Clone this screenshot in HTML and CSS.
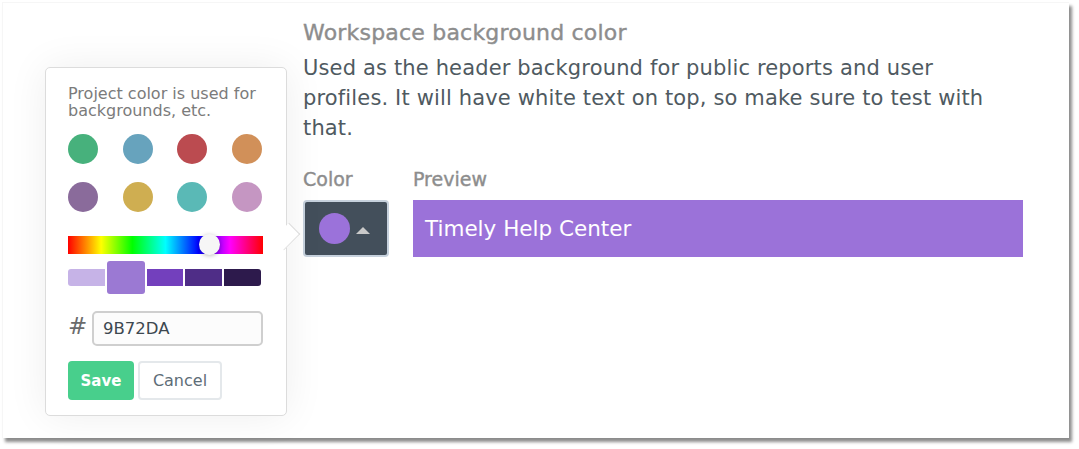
FILE: index.html
```html
<!DOCTYPE html>
<html>
<head>
<meta charset="utf-8">
<link rel="stylesheet" href="styles.css">
</head>
<body>
<div class="frame">
  <div class="popover">
    <p class="hint">Project color is used for backgrounds, etc.</p>
    <div class="swatches">
      <span class="dot" style="background:#47b17c"></span>
      <span class="dot" style="background:#67a3bd"></span>
      <span class="dot" style="background:#bb4b50"></span>
      <span class="dot" style="background:#d19059"></span>
      <span class="dot" style="background:#8a6b9b"></span>
      <span class="dot" style="background:#cfae51"></span>
      <span class="dot" style="background:#5ab9b6"></span>
      <span class="dot" style="background:#c596c2"></span>
    </div>
    <div class="hue"><span class="thumb"></span></div>
    <div class="shades">
      <span class="shade" style="background:#c6b3e7"></span>
      <span class="shade selected" style="background:#9b79d3"></span>
      <span class="shade" style="background:#7340bd"></span>
      <span class="shade" style="background:#4f2d87"></span>
      <span class="shade" style="background:#2d1a4c"></span>
    </div>
    <div class="hexrow">
      <span class="hash">#</span>
      <div class="hexinput">9B72DA</div>
    </div>
    <div class="buttons">
      <button class="btn save">Save</button>
      <button class="btn cancel">Cancel</button>
    </div>
  </div>
  <div class="content">
    <h2 class="title">Workspace background color</h2>
    <p class="desc">Used as the header background for public reports and user profiles. It will have white text on top, so make sure to test with that.</p>
    <div class="fields">
      <div class="field color-field">
        <div class="label">Color</div>
        <div class="color-btn">
          <span class="color-dot"></span>
          <span class="caret"></span>
        </div>
      </div>
      <div class="field preview-field">
        <div class="label">Preview</div>
        <div class="preview">Timely Help Center</div>
      </div>
    </div>
  </div>
</div>
</body>
</html>
```
FILE: styles.css
```css
* { box-sizing: border-box; }
html, body { margin: 0; padding: 0; background: #fff; }
body {
  font-family: "DejaVu Sans", "Noto Sans", sans-serif;
  width: 1079px;
  height: 449px;
  overflow: hidden;
}
.frame {
  margin: 2px 0 0 2px;
  width: 1067px;
  height: 436px;
  background: #fff;
  border-top: 1px solid #f6f6f6;
  border-left: 1px solid #f6f6f6;
  box-shadow: 3px 4px 3px rgba(0,0,0,0.45);
  display: flex;
  padding-left: 42px;
}
.popover {
  position: relative;
  margin-top: 64px;
  width: 242px;
  height: 349px;
  border: 1px solid #dcdcdc;
  border-radius: 5px;
  background: #fff;
  box-shadow: 0 0 40px rgba(0,0,0,0.07);
  padding: 17px 22px 0 22px;
}
.popover::before {
  content: "";
  position: absolute;
  right: -11px;
  top: 158px;
  width: 20px;
  height: 20px;
  background: #fff;
  border-top: 1px solid #dcdcdc;
  border-right: 1px solid #dcdcdc;
  transform: rotate(45deg) scale(0.75, 1.1);
}
.hint {
  margin: 0;
  font-size: 16px;
  line-height: 17px;
  color: #7b7b7b;
}
.swatches {
  margin-top: 15px;
  display: grid;
  grid-template-columns: repeat(4, 30px);
  justify-content: space-between;
  row-gap: 18px;
  width: 194px;
}
.dot {
  width: 30px;
  height: 30px;
  border-radius: 50%;
  display: block;
}
.hue {
  position: relative;
  margin-top: 24px;
  width: 195px;
  height: 18px;
  background: linear-gradient(to right, #f00 0%, #ff0 17%, #0f0 33%, #0ff 50%, #00f 67%, #f0f 83%, #f00 100%);
}
.thumb {
  position: absolute;
  left: 131px;
  top: -2px;
  width: 21px;
  height: 21px;
  border-radius: 50%;
  background: #f6f6f6;
  box-shadow: 0 1px 4px rgba(0,0,0,0.25);
}
.shades {
  margin-top: 7px;
  display: flex;
  align-items: center;
  gap: 2px;
  height: 33px;
  width: 193px;
}
.shade {
  display: block;
  width: 37px;
  height: 17px;
}
.shade:first-child { border-radius: 3px 0 0 3px; }
.shade:last-child { border-radius: 0 3px 3px 0; }
.shade.selected {
  width: 38px;
  height: 33px;
  border-radius: 3px;
}
.hexrow {
  margin-top: 17px;
  display: flex;
  align-items: center;
  gap: 7px;
}
.hash {
  font-size: 23px;
  color: #6b6b6b;
  width: 17px;
  margin-top: -5px;
}
.hexinput {
  width: 171px;
  height: 35px;
  border: 2px solid #cfcfcf;
  border-radius: 5px;
  padding-left: 9px;
  font-size: 16.5px;
  line-height: 31px;
  color: #3d4850;
  background: #fcfcfc;
}
.buttons {
  margin-top: 15px;
  display: flex;
  gap: 4px;
}
.btn {
  font-family: inherit;
  height: 39px;
  border-radius: 4px;
  padding: 0;
}
.save {
  width: 66px;
  background: #48cf8c;
  border: none;
  color: #fff;
  font-size: 15px;
  font-weight: 700;
}
.cancel {
  width: 84px;
  background: #fff;
  border: 2px solid #e4e8eb;
  color: #5e6d77;
  font-size: 16px;
}
.content {
  margin-left: 16px;
  margin-top: 15px;
  width: 720px;
}
.title {
  margin: 0;
  font-size: 22px;
  line-height: 30px;
  letter-spacing: 0.2px;
  font-weight: 400;
  -webkit-text-stroke: 0.4px #8d8d8d;
  color: #8d8d8d;
}
.desc {
  margin: 5px 0 0 0;
  max-width: 700px;
  font-size: 21px;
  letter-spacing: 0.15px;
  line-height: 30px;
  color: #4f5a61;
}
.fields {
  margin-top: 24px;
  display: flex;
}
.label {
  font-size: 19px;
  line-height: 24px;
  -webkit-text-stroke: 0.4px #8d8d8d;
  color: #8d8d8d;
  margin-bottom: 9px;
}
.color-field { width: 110px; }
.preview-field { flex: 1; }
.color-btn {
  width: 86px;
  height: 57px;
  background: #434f5b;
  border: 2px solid #c6d1dd;
  border-radius: 4px;
  display: flex;
  align-items: center;
  padding-left: 14px;
  gap: 6px;
}
.color-dot {
  width: 31px;
  height: 31px;
  border-radius: 50%;
  background: #9b72da;
}
.caret {
  width: 0;
  height: 0;
  border-left: 7px solid transparent;
  border-right: 7px solid transparent;
  border-bottom: 7px solid #c9c9c9;
  margin-top: 4px;
}
.preview {
  width: 610px;
  height: 57px;
  background: #9b72d9;
  color: #fff;
  font-size: 21.5px;
  line-height: 57px;
  padding-left: 12px;
}
```
